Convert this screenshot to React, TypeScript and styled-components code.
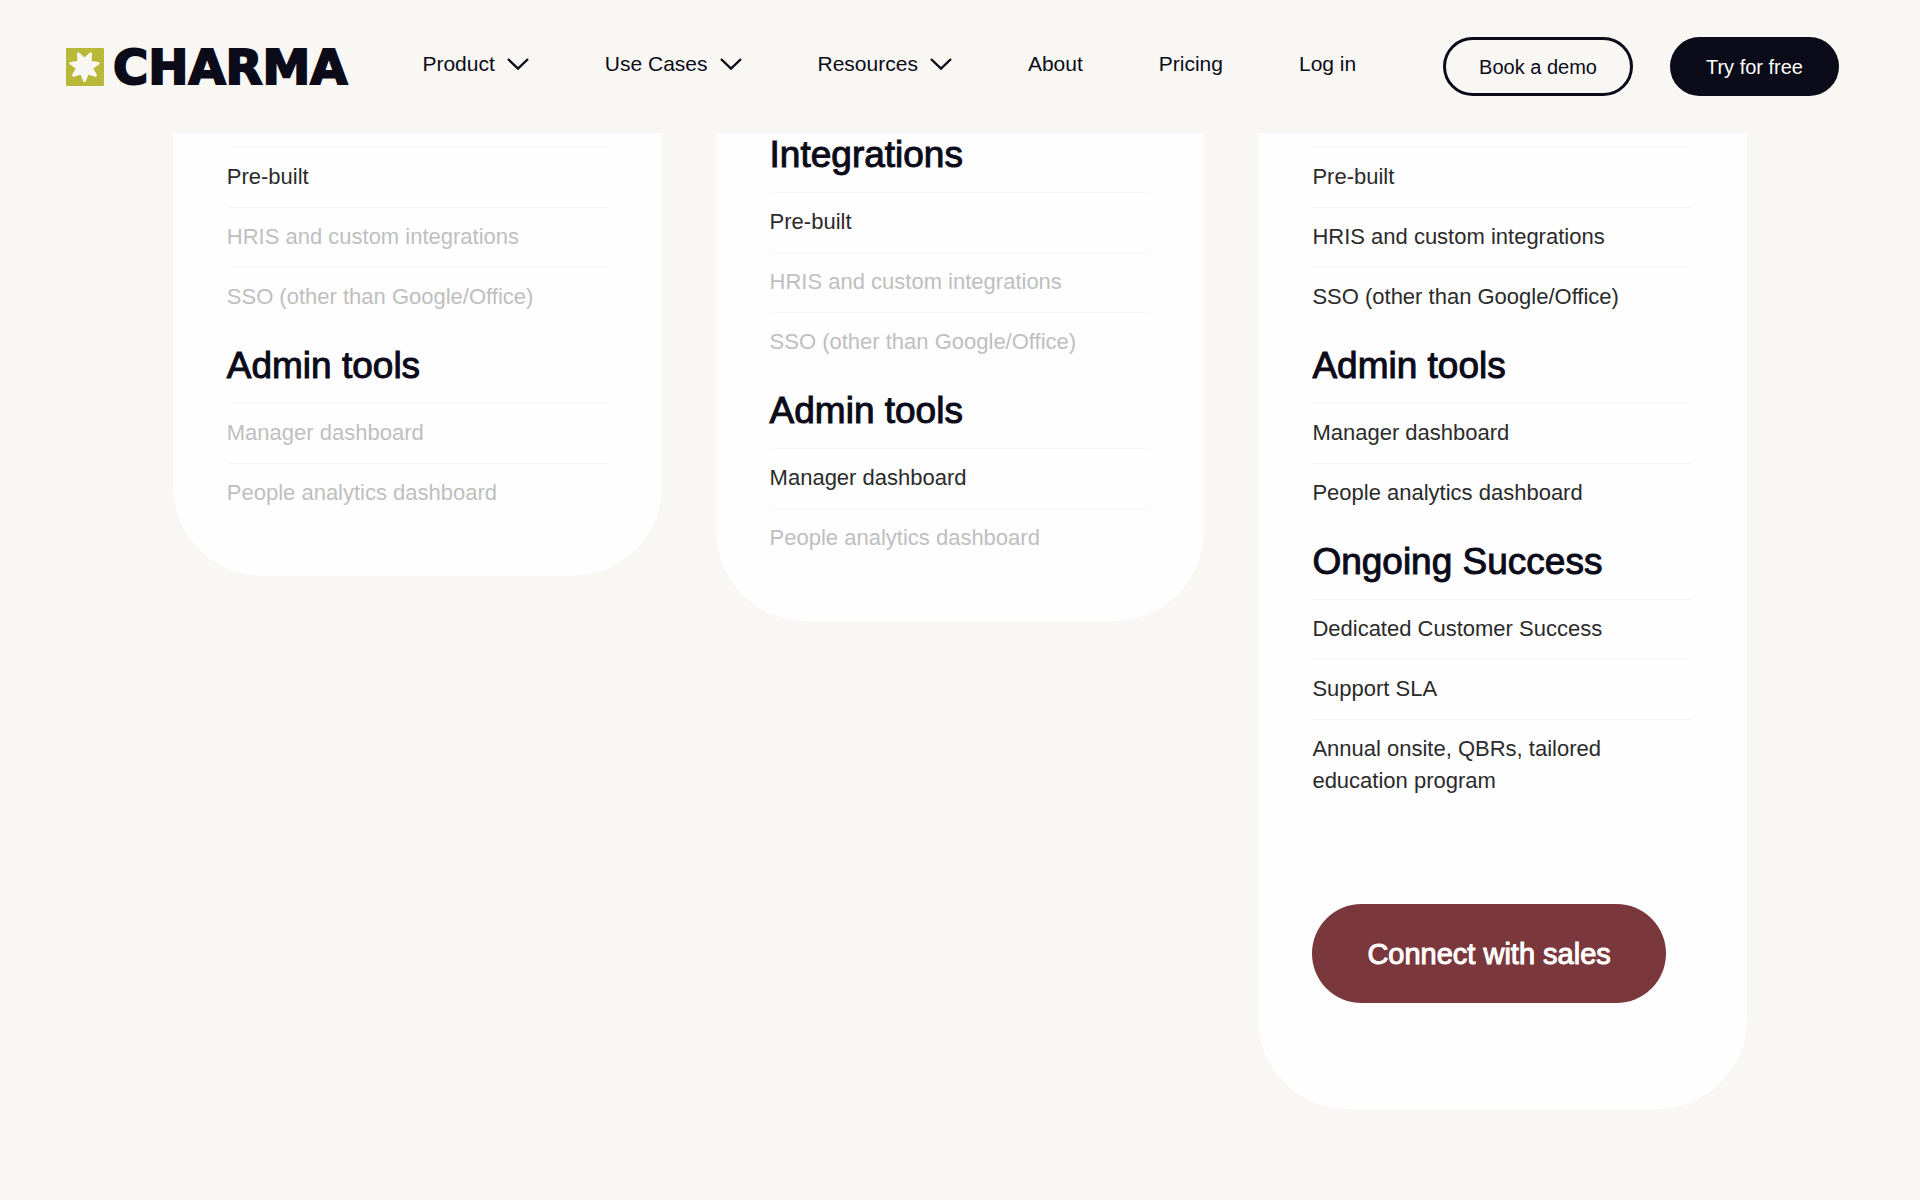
import React from "react";
import styled, { createGlobalStyle } from "styled-components";

const color = {
  page: "#f8f7f3",
  card: "#fefefe",
  ink: "#0b0b19",
  text: "#2b2b2b",
  muted: "#bfbfbf",
  line: "#f6f5f1",
  lime: "#b8b839",
  maroon: "#7a383c",
};

const GlobalStyle = createGlobalStyle`
  *, *::before, *::after { box-sizing: border-box; }
  body {
    margin: 0;
    background: ${color.page};
    color: ${color.text};
    font-family: "Liberation Sans", Arial, Helvetica, sans-serif;
  }
`;

const Header = styled.header`
  position: sticky;
  top: 0;
  z-index: 1;
  display: flex;
  align-items: center;
  height: 133px;
  padding: 0 81px 0 66px;
  background: ${color.page};
`;

const Logo = styled.a`
  display: flex;
  align-items: center;
  gap: 9px;
  color: ${color.ink};
  text-decoration: none;
`;

const Wordmark = styled.span`
  font-family: "DejaVu Sans", Inter, sans-serif;
  font-size: 48px;
  font-weight: 700;
  line-height: 38px;
  -webkit-text-stroke: 2px currentColor;
`;

const Nav = styled.nav`
  display: flex;
  align-items: center;
  gap: 76px;
  margin-left: 75px;
  padding-bottom: 6px;
`;

const navText = `
  display: flex;
  align-items: center;
  gap: 12px;
  padding: 0;
  border: 0;
  background: none;
  color: ${color.ink};
  font-family: inherit;
  font-size: 21px;
  line-height: 28px;
  white-space: nowrap;
  text-decoration: none;
  cursor: pointer;
`;

const NavLink = styled.a`
  ${navText}
`;

const NavMenu = styled.button`
  ${navText}
`;

const Actions = styled.div`
  display: flex;
  gap: 37px;
  margin-left: auto;
`;

const Pill = styled.a<{ $solid?: boolean }>`
  display: flex;
  align-items: center;
  height: 59px;
  padding: 0 33px;
  border: 3px solid ${color.ink};
  border-radius: 30px;
  background: ${(p) => (p.$solid ? color.ink : "transparent")};
  color: ${(p) => (p.$solid ? "#ffffff" : color.ink)};
  font-size: 20px;
  line-height: 28px;
  white-space: nowrap;
  text-decoration: none;
`;

const Plans = styled.main`
  display: grid;
  grid-template-columns: repeat(3, minmax(0, 1fr));
  align-items: start;
  gap: 54px;
  padding: 0 9% 90px;
`;

const Card = styled.article<{ $top: number }>`
  display: flex;
  flex-direction: column;
  gap: 17px;
  padding: ${(p) => p.$top}px 54px 53px;
  border-radius: 0 0 90px 90px;
  background: ${color.card};
`;

const GroupTitle = styled.h2`
  margin: 0;
  padding-bottom: 16px;
  color: ${color.ink};
  font-size: 37px;
  font-weight: 400;
  line-height: 43px;
  -webkit-text-stroke: 1px currentColor;
`;

const FeatureList = styled.ul`
  margin: 0;
  padding: 0;
  list-style: none;
`;

const Feature = styled.li<{ $off?: boolean }>`
  padding: 13px 0 14px;
  border-top: 1px solid ${color.line};
  color: ${(p) => (p.$off ? color.muted : color.text)};
  font-size: 22px;
  line-height: 32px;
`;

const CallToAction = styled.a`
  display: flex;
  align-items: center;
  align-self: flex-start;
  height: 99px;
  margin: 76px 0 53px;
  padding: 0 55px;
  border-radius: 50px;
  background: ${color.maroon};
  color: #ffffff;
  font-size: 29px;
  line-height: 40px;
  white-space: nowrap;
  text-decoration: none;
  -webkit-text-stroke: 1px currentColor;
`;

const starPoints = Array.from({ length: 14 }, (_, i) => {
  const angle = Math.PI / 2 + (i * Math.PI) / 7;
  const radius = i % 2 === 0 ? 14 : 7;
  return `${18.5 + radius * Math.cos(angle)},${18.5 + radius * Math.sin(angle)}`;
}).join(" ");

const LogoMark = () => (
  <svg width="38" height="38" viewBox="0 0 38 38" aria-hidden="true">
    <rect width="38" height="38" rx="1" fill={color.lime} />
    <polygon
      points={starPoints}
      fill={color.page}
      stroke={color.page}
      strokeWidth="3"
      strokeLinejoin="round"
    />
  </svg>
);

const Chevron = () => (
  <svg width="22" height="14" viewBox="0 0 22 14" fill="none" aria-hidden="true">
    <path d="M1 2 11 11.5 21 2" stroke={color.ink} strokeWidth="2.4" />
  </svg>
);

type Item = { label: string; off?: boolean };
type Group = { title?: string; items: Item[] };
type Plan = { top: number; groups: Group[]; action?: string };

const plans: Plan[] = [
  {
    top: 14,
    groups: [
      {
        items: [
          { label: "Pre-built" },
          { label: "HRIS and custom integrations", off: true },
          { label: "SSO (other than Google/Office)", off: true },
        ],
      },
      {
        title: "Admin tools",
        items: [
          { label: "Manager dashboard", off: true },
          { label: "People analytics dashboard", off: true },
        ],
      },
    ],
  },
  {
    top: 0,
    groups: [
      {
        title: "Integrations",
        items: [
          { label: "Pre-built" },
          { label: "HRIS and custom integrations", off: true },
          { label: "SSO (other than Google/Office)", off: true },
        ],
      },
      {
        title: "Admin tools",
        items: [
          { label: "Manager dashboard" },
          { label: "People analytics dashboard", off: true },
        ],
      },
    ],
  },
  {
    top: 14,
    groups: [
      {
        items: [
          { label: "Pre-built" },
          { label: "HRIS and custom integrations" },
          { label: "SSO (other than Google/Office)" },
        ],
      },
      {
        title: "Admin tools",
        items: [
          { label: "Manager dashboard" },
          { label: "People analytics dashboard" },
        ],
      },
      {
        title: "Ongoing Success",
        items: [
          { label: "Dedicated Customer Success" },
          { label: "Support SLA" },
          { label: "Annual onsite, QBRs, tailored education program" },
        ],
      },
    ],
    action: "Connect with sales",
  },
];

export default function App() {
  return (
    <>
      <GlobalStyle />
      <Header>
        <Logo href="#">
          <LogoMark />
          <Wordmark>CHARMA</Wordmark>
        </Logo>
        <Nav>
          {["Product", "Use Cases", "Resources"].map((label) => (
            <NavMenu key={label} type="button" aria-haspopup="true">
              {label}
              <Chevron />
            </NavMenu>
          ))}
          {["About", "Pricing", "Log in"].map((label) => (
            <NavLink key={label} href="#">
              {label}
            </NavLink>
          ))}
        </Nav>
        <Actions>
          <Pill href="#">Book a demo</Pill>
          <Pill href="#" $solid>
            Try for free
          </Pill>
        </Actions>
      </Header>
      <Plans>
        {plans.map((plan, i) => (
          <Card key={i} $top={plan.top}>
            {plan.groups.map((group, j) => (
              <section key={j}>
                {group.title && <GroupTitle>{group.title}</GroupTitle>}
                <FeatureList>
                  {group.items.map((item) => (
                    <Feature key={item.label} $off={item.off}>
                      {item.label}
                    </Feature>
                  ))}
                </FeatureList>
              </section>
            ))}
            {plan.action && <CallToAction href="#">{plan.action}</CallToAction>}
          </Card>
        ))}
      </Plans>
    </>
  );
}
